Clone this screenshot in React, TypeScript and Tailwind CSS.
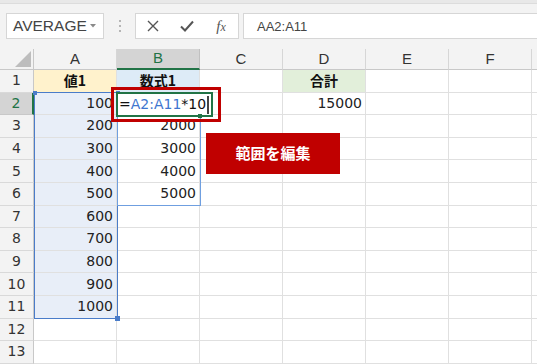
import React from "react";

const COLS = ["A", "B", "C", "D", "E", "F"];

type Cell = { text?: string; align?: "left" | "right" | "center"; bold?: boolean; bg?: string };

// values per row, by column letter
const DATA: Record<number, Record<string, Cell>> = {
  1: {
    A: { text: "値1", align: "center", bold: true, bg: "bg-[#fff2cc]" },
    B: { text: "数式1", align: "center", bold: true, bg: "bg-[#ddebf7]" },
    D: { text: "合計", align: "center", bold: true, bg: "bg-[#e2efda]" },
  },
  2: { A: { text: "100" }, D: { text: "15000" } },
  3: { A: { text: "200" }, B: { text: "2000" } },
  4: { A: { text: "300" }, B: { text: "3000" } },
  5: { A: { text: "400" }, B: { text: "4000" } },
  6: { A: { text: "500" }, B: { text: "5000" } },
  7: { A: { text: "600" } },
  8: { A: { text: "700" } },
  9: { A: { text: "800" } },
  10: { A: { text: "900" } },
  11: { A: { text: "1000" } },
};

const ROWS = Array.from({ length: 13 }, (_, i) => i + 1);

function Toolbar() {
  return (
    <div className="h-[49px] bg-[#f3f3f3]">
      <div className="h-[4px] bg-[#e8e8e8] border-b border-[#dcdcdc]" />
      <div className="flex items-start mt-[9px] h-[26px]">
        <div className="ml-[6px] w-[98px] h-[26px] bg-white border border-[#d6d6d6] flex items-center justify-between pl-[6px] pr-[7px]">
          <span className="text-[15.5px] text-[#444] font-['Liberation_Sans',sans-serif] leading-none">AVERAGE</span>
          <svg width="6" height="4" viewBox="0 0 6 4">
            <path d="M0 0 L6 0 L3 3.5 Z" fill="#8a8a8a" />
          </svg>
        </div>
        <div className="w-[31px] h-[26px] flex flex-col items-center justify-center gap-[3px]">
          <span className="w-[2px] h-[2px] bg-[#b5b5b5]" />
          <span className="w-[2px] h-[2px] bg-[#b5b5b5]" />
          <span className="w-[2px] h-[2px] bg-[#b5b5b5]" />
        </div>
        <div className="w-[104px] h-[26px] bg-white border border-[#d6d6d6] flex items-center">
          <div className="w-[34px] flex justify-center">
            <svg width="12" height="12" viewBox="0 0 12 12">
              <path d="M1 1 L11 11 M11 1 L1 11" stroke="#555" strokeWidth="1.4" />
            </svg>
          </div>
          <div className="w-[34px] flex justify-center">
            <svg width="14" height="12" viewBox="0 0 14 12">
              <path d="M1 6.5 L5 10.5 L13 1.5" stroke="#555" strokeWidth="2" fill="none" />
            </svg>
          </div>
          <div className="w-[34px] flex justify-center">
            <span className="font-['Liberation_Serif',serif] italic text-[15px] text-[#555] leading-none">
              f<span className="text-[12px]">x</span>
            </span>
          </div>
        </div>
        <div className="ml-[4px] flex-1 h-[26px] bg-white border border-r-0 border-[#d6d6d6] flex items-center pl-[13px]">
          <span className="text-[13px] text-[#444] font-['Liberation_Sans',sans-serif] leading-none">AA2:A11</span>
        </div>
      </div>
    </div>
  );
}

function Sheet() {
  return (
    <div className="grid grid-cols-[34px_repeat(6,83px)_1fr] grid-rows-[21px_repeat(13,22.6px)] font-['DejaVu_Sans','Noto_Sans_CJK_JP',sans-serif] text-[14px] text-[#222]">
      {/* corner */}
      <div className="bg-[#f3f3f3] border-r border-b border-[#c8c8c8] relative">
        <svg className="absolute right-[2px] bottom-[2px]" width="16" height="16" viewBox="0 0 16 16">
          <path d="M16 0 L16 16 L0 16 Z" fill="#bdbdbd" />
        </svg>
      </div>
      {COLS.map((c) => (
        <div
          key={c}
          className={
            c === "B"
              ? "bg-[#d4d4d4] border-r border-[#c0c0c0] border-b-2 border-b-[#217346] flex items-center justify-center text-[#217346] text-[15px] font-['Liberation_Sans',sans-serif]"
              : "bg-[#f3f3f3] border-r border-[#d6d6d6] border-b border-b-[#c8c8c8] flex items-center justify-center text-[#333] text-[15px] font-['Liberation_Sans',sans-serif]"
          }
        >
          {c}
        </div>
      ))}
      <div className="bg-[#f3f3f3] border-b border-[#c8c8c8]" />

      {ROWS.map((r) => (
        <React.Fragment key={r}>
          <div
            className={
              r === 2
                ? "bg-[#d4d4d4] border-r-2 border-r-[#217346] border-b border-b-[#c8c8c8] flex items-center justify-center text-[#217346]"
                : "bg-[#f3f3f3] border-r border-r-[#c8c8c8] border-b border-b-[#d9d9d9] flex items-center justify-center text-[#333]"
            }
          >
            {r}
          </div>
          {COLS.map((c) => {
            const cell = DATA[r]?.[c];
            const inA = c === "A" && r >= 2 && r <= 11;
            const bg = cell?.bg ?? (inA ? "bg-[#e8eef8]" : "bg-white");
            const just =
              cell?.align === "center" ? "justify-center" : "justify-end pr-[3px]";
            return (
              <div
                key={c}
                className={`${bg} border-r border-b border-[#e0e0e0] flex items-center ${just} ${
                  cell?.bold ? "font-bold font-['Noto_Sans_CJK_JP',sans-serif] text-[14px] text-[#111]" : ""
                }`}
              >
                {cell?.text}
              </div>
            );
          })}
          <div className="bg-white border-b border-[#e0e0e0]" />
        </React.Fragment>
      ))}
    </div>
  );
}

export default function App() {
  return (
    <div className="relative w-[537px] h-[364px] overflow-hidden bg-white">
      <Toolbar />
      <Sheet />

      {/* range A2:A11 */}
      <div className="absolute left-[34px] top-[92px] w-[84px] h-[227px] border border-[#4a7cc9] pointer-events-none">
        <span className="absolute -left-[2px] -top-[2px] w-[4px] h-[4px] bg-[#4a7cc9]" />
        <span className="absolute -right-[3px] -bottom-[3px] w-[5px] h-[5px] bg-[#4a7cc9]" />
      </div>
      {/* range B2:B6 */}
      <div className="absolute left-[117px] top-[92px] w-[84px] h-[114px] border border-[#6f9fe0] pointer-events-none">
        <span className="absolute -left-[2px] -top-[2px] w-[4px] h-[4px] bg-[#4a7cc9]" />
      </div>

      {/* edit cell */}
      <div className="absolute left-[116px] top-[92px] w-[97px] h-[25px] bg-white border-2 border-[#217346] flex items-center pl-[1px] font-['DejaVu_Sans',sans-serif] text-[14px] text-[#111]">
        <span>=</span>
        <span className="text-[#3e76cf]">A2:A11</span>
        <span>*10</span>
        <span className="ml-[1px] w-[2px] h-[18px] bg-[#444]" />
        <span className="absolute -right-[13px] -bottom-[4px] w-[4px] h-[4px] bg-[#217346] hidden" />
      </div>
      <span className="absolute left-[198px] top-[114px] w-[4px] h-[4px] bg-[#217346]" />

      {/* annotation */}
      <div className="absolute left-[111px] top-[87px] w-[110px] h-[35px] border-[3px] border-[#c00000]" />
      <div className="absolute left-[206px] top-[133px] w-[134px] h-[41px] bg-[#c00000] flex items-center justify-center text-white font-bold text-[15px] font-['Noto_Sans_CJK_JP',sans-serif]">
        範囲を編集
      </div>
    </div>
  );
}
